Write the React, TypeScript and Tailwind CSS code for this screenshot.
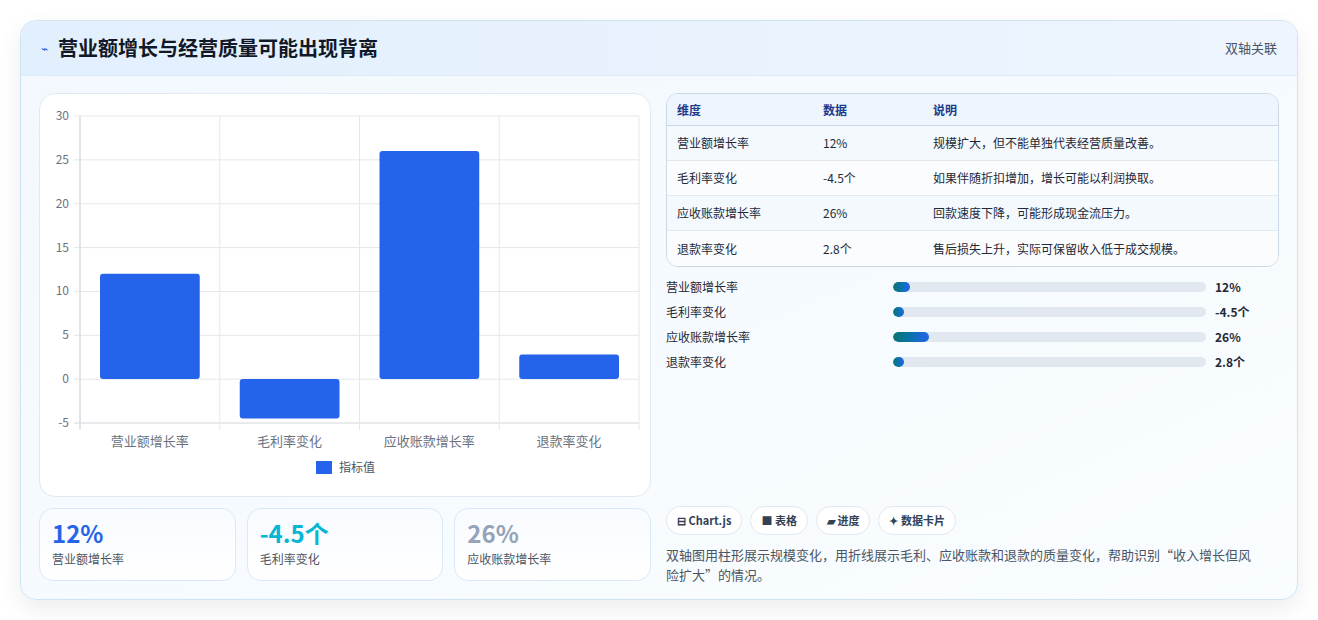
import React from "react";

const F = { fontFamily: '"Noto Sans CJK SC","Noto Sans",sans-serif' };
const cats = ["营业额增长率", "毛利率变化", "应收账款增长率", "退款率变化"];
const vals = [12, -4.5, 26, 2.8];
const rows = [
  ["营业额增长率", "12%", "规模扩大，但不能单独代表经营质量改善。"],
  ["毛利率变化", "-4.5个", "如果伴随折扣增加，增长可能以利润换取。"],
  ["应收账款增长率", "26%", "回款速度下降，可能形成现金流压力。"],
  ["退款率变化", "2.8个", "售后损失上升，实际可保留收入低于成交规模。"],
];
const fills = [17, 11, 36, 11];

function Chart() {
  const top = 22, step = 43.86, zero = 285, left = 40, right = 599;
  const cw = (right - left) / 4;
  const ticks = [30, 25, 20, 15, 10, 5, 0, -5];
  return (
    <svg width="611" height="403" style={F}>
      {ticks.map((t, i) => (
        <g key={t}>
          <line x1={left - 6} x2={right} y1={top + i * step} y2={top + i * step} stroke={t === -5 ? "#d1d5db" : "#e5e7eb"} />
          <text x={29} y={top + i * step + 4} textAnchor="end" fontSize="12" fill="#6b7280">{t}</text>
        </g>
      ))}
      {[0, 1, 2, 3, 4].map((i) => (
        <line key={i} x1={left + i * cw} x2={left + i * cw} y1={top} y2={336} stroke="#e5e7eb" />
      ))}
      <line x1={left} x2={left} y1={top} y2={336} stroke="#d1d5db" />
      {vals.map((v, i) => {
        const h = Math.abs(v) * (step / 5);
        const y = v >= 0 ? zero - h : zero;
        return <rect key={i} x={left + i * cw + 20} y={y} width={cw - 40} height={h} rx="3" fill="#2563eb" />;
      })}
      {cats.map((c, i) => (
        <text key={c} x={left + i * cw + cw / 2} y={352} textAnchor="middle" fontSize="13" fill="#6b7280">{c}</text>
      ))}
      <rect x="276" y="367" width="16" height="13" fill="#2563eb" />
      <text x="299" y="378" fontSize="12" fill="#4b5563">指标值</text>
    </svg>
  );
}

export default function App() {
  return (
    <div className="w-[1318px] h-[620px] bg-white pt-[20px] pl-[20px]" style={F}>
      <div className="w-[1278px] h-[580px] rounded-[16px] border border-[#cfe4f3] overflow-hidden shadow-[0_8px_24px_rgba(0,0,0,0.08)] bg-gradient-to-br from-[#f3f8fe] to-[#f9fdff]">
        <div className="h-[55px] flex items-center justify-between px-[20px] bg-gradient-to-r from-[#e2effd] to-[#eef5fe] border-b border-[#dce9f6]">
          <div className="flex items-center gap-[10px]">
            <span className="text-[#2563eb] text-[12px]">⌁</span>
            <span className="text-[20px] font-bold text-[#111827]">营业额增长与经营质量可能出现背离</span>
          </div>
          <span className="text-[13px] text-[#4b5563]">双轴关联</span>
        </div>
        <div className="flex gap-[15px] pl-[18px] pt-[17px]">
          <div className="w-[612px] flex flex-col gap-[11px]">
            <div className="h-[404px] bg-white rounded-[16px] border border-[#e0e9f3]">
              <Chart />
            </div>
            <div className="flex gap-[11px]">
              {[["12%", "text-[#2563eb]", "营业额增长率"], ["-4.5个", "text-[#06b6d4]", "毛利率变化"], ["26%", "text-[#94a3b8]", "应收账款增长率"]].map(([v, c, l]) => (
                <div key={l} className="flex-1 h-[73px] rounded-[14px] border border-[#dbe8f5] bg-gradient-to-b from-[#f8fbff] to-white px-[12px] pt-[9px]">
                  <div className={`text-[24px] font-bold leading-[30px] ${c}`}>{v}</div>
                  <div className="text-[12px] text-[#4b5563] mt-[2px]">{l}</div>
                </div>
              ))}
            </div>
          </div>
          <div className="w-[613px] flex flex-col">
            <div className="rounded-[12px] border border-[#cbd8e6] overflow-hidden bg-white text-[12px]">
              <div className="h-[32px] flex items-center bg-[#eef5fd] border-b border-[#cbd8e6] text-[#1e3a8a] font-bold px-[10px]">
                <span className="w-[146px]">维度</span><span className="w-[110px]">数据</span><span>说明</span>
              </div>
              {rows.map((r, i) => (
                <div key={i} className={`h-[35px] flex items-center px-[10px] text-[#1f2937] ${i < 3 ? "border-b border-[#e2e8f0]" : ""} ${i % 2 === 0 ? "bg-[#f4f9fd]" : "bg-[#fbfcfe]"}`}>
                  <span className="w-[146px]">{r[0]}</span><span className="w-[110px]">{r[1]}</span><span>{r[2]}</span>
                </div>
              ))}
            </div>
            <div className="flex flex-col gap-[6px] mt-[10px]">
              {rows.map((r, i) => (
                <div key={i} className="h-[19px] flex items-center text-[12px] text-[#1f2937]">
                  <span className="w-[227px]">{r[0]}</span>
                  <div className="w-[313px] h-[10px] rounded-full bg-[#e2e8f0] overflow-hidden">
                    <div className="h-full rounded-full bg-gradient-to-r from-[#0f766e] to-[#2563eb]" style={{ width: fills[i] }} />
                  </div>
                  <span className="ml-[9px] font-bold">{r[1]}</span>
                </div>
              ))}
            </div>
            <div className="flex gap-[8px] mt-[135px]">
              {["⊟ Chart.js", "■ 表格", "▰ 进度", "✦ 数据卡片"].map((t) => (
                <span key={t} className="h-[29px] px-[10px] flex items-center rounded-full border border-[#e2e8f0] bg-white text-[11px] font-bold text-[#334155]">{t}</span>
              ))}
            </div>
            <p className="mt-[10px] text-[13px] leading-[20px] text-[#4b5563] pr-[20px]">双轴图用柱形展示规模变化，用折线展示毛利、应收账款和退款的质量变化，帮助识别“收入增长但风险扩大”的情况。</p>
          </div>
        </div>
      </div>
    </div>
  );
}
